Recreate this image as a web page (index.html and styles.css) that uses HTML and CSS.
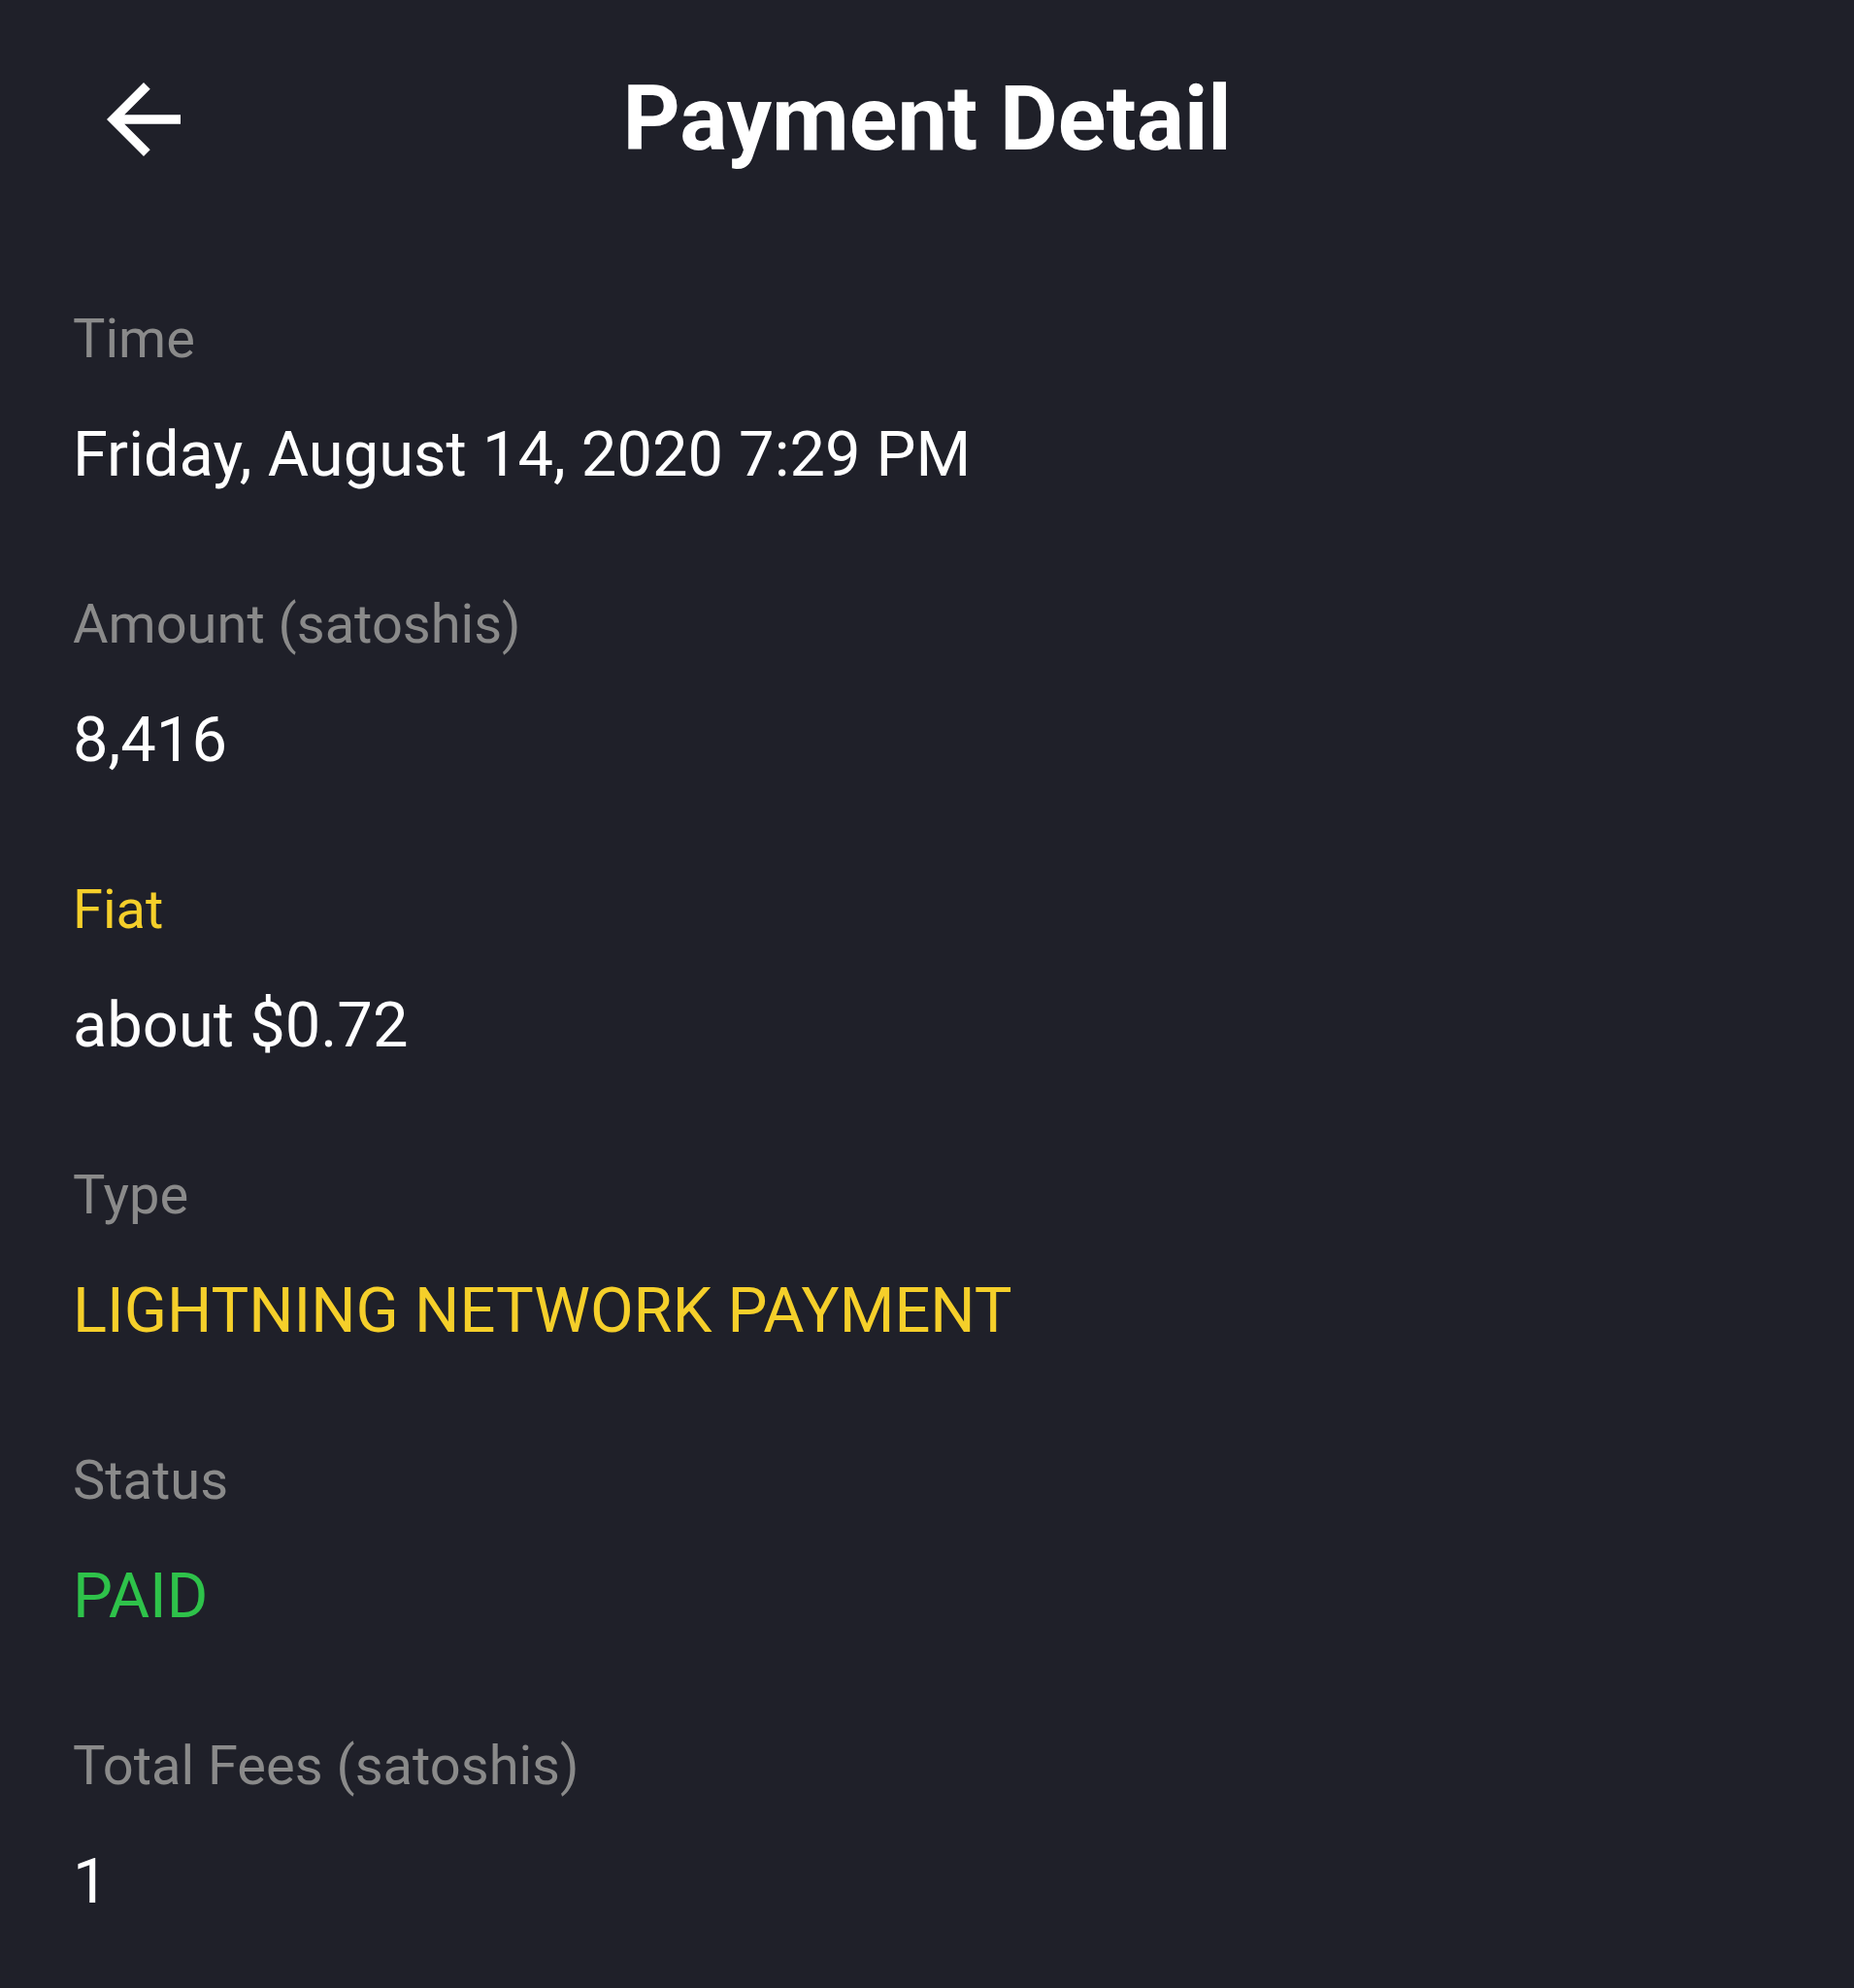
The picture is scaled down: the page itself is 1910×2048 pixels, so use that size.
FILE: index.html
```html
<!DOCTYPE html>
<html lang="en">

<head>
    <meta charset="UTF-8">
    <meta name="viewport" content="width=device-width, initial-scale=1.0">
    <title>Payment Detail</title>
    <link rel="stylesheet" href="styles.css">
</head>

<body>
    <!-- Header with back button -->
    <div class="header">
        <div class="back">
            <svg viewBox="0 0 24 24" width="114" height="114">
                <path fill="#ffffff" d="M20 11H7.83l5.59-5.59L12 4l-8 8 8 8 1.41-1.41L7.83 13H20v-2z"/>
            </svg>
        </div>
        <h1 class="title">Payment Detail</h1>
        <div></div>
    </div>

    <!-- Payment fields -->
    <div class="details">
        <div class="row">
            <div class="label">Time</div>
            <div class="value">Friday, August 14, 2020 7:29 PM</div>
        </div>
        <div class="row">
            <div class="label">Amount (satoshis)</div>
            <div class="value">8,416</div>
        </div>
        <div class="row">
            <div class="label yellow">Fiat</div>
            <div class="value">about $0.72</div>
        </div>
        <div class="row">
            <div class="label">Type</div>
            <div class="value yellow">LIGHTNING NETWORK PAYMENT</div>
        </div>
        <div class="row">
            <div class="label">Status</div>
            <div class="value green">PAID</div>
        </div>
        <div class="row">
            <div class="label">Total Fees (satoshis)</div>
            <div class="value">1</div>
        </div>
    </div>
</body>

</html>
```

FILE: styles.css
```css
/* Page base */
body {
    margin: 0;
    background-color: #1f2029;
    color: #ffffff;
    font-family: Roboto, "Liberation Sans", sans-serif;
    min-height: 2048px;
}

/* Header */
.header {
    display: grid;
    grid-template-columns: 1fr auto 1fr;
    align-items: center;
    padding-top: 63px;
}

.back {
    padding-left: 91px;
    display: flex;
}

.title {
    margin: 0;
    font-size: 92px;
    font-weight: 700;
    line-height: 120px;
}

/* Detail rows */
.details {
    padding: 134px 75px 0;
    display: flex;
    flex-direction: column;
    gap: 105px;
}

.label {
    font-size: 56px;
    line-height: 64px;
    color: #8a8a8a;
    margin-bottom: 49px;
}

.value {
    font-size: 65px;
    line-height: 76px;
}

.yellow {
    color: #f5cf2a;
}

.green {
    color: #2ec24a;
}
```
